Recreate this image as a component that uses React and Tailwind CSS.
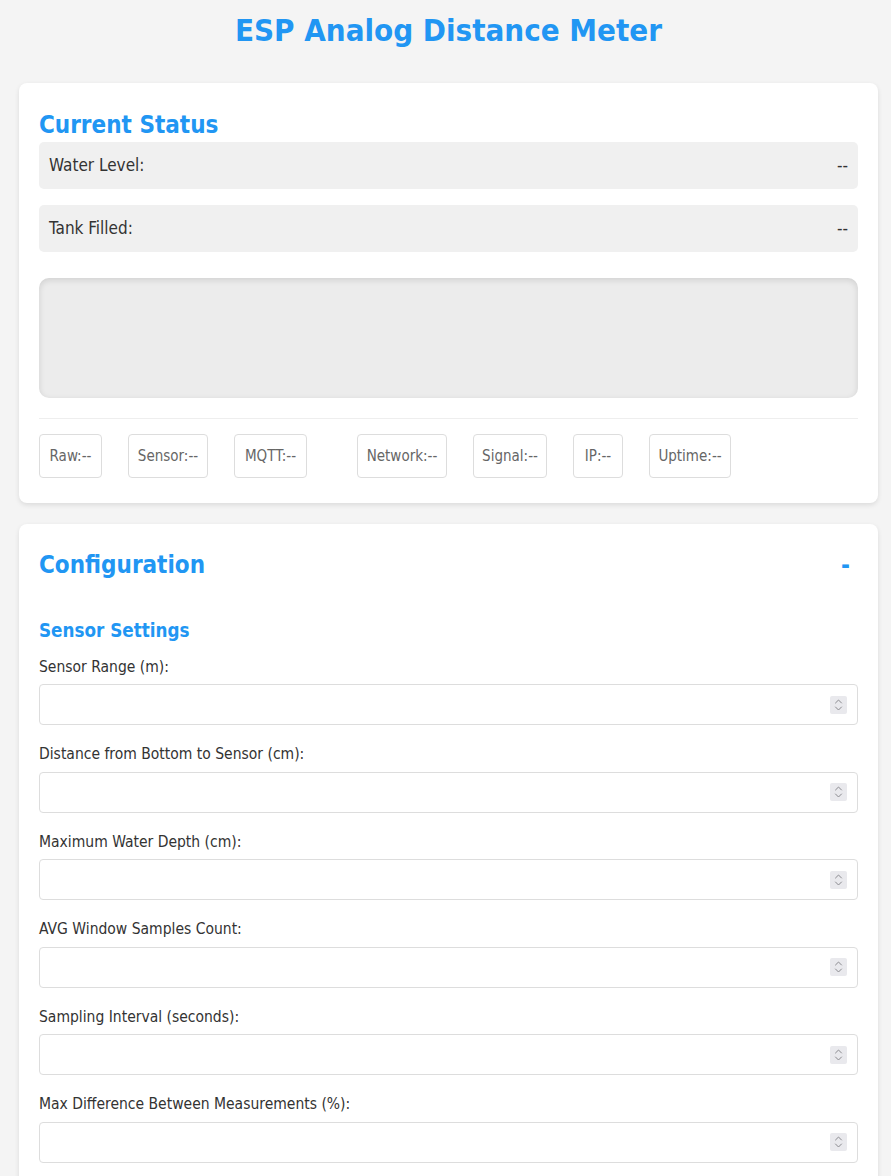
const font = { fontFamily: '"DejaVu Sans Condensed", "DejaVu Sans", sans-serif' }

const chips = [
  { label: 'Raw:', w: 'w-[63px]' },
  { label: 'Sensor:', w: 'w-[80px]' },
  { label: 'MQTT:', w: 'w-[73px]', after: 'mr-[24px]' },
  { label: 'Network:', w: 'w-[90px]' },
  { label: 'Signal:', w: 'w-[74px]' },
  { label: 'IP:', w: 'w-[50px]' },
  { label: 'Uptime:', w: 'w-[82px]' },
]

const fields = [
  'Sensor Range (m):',
  'Distance from Bottom to Sensor (cm):',
  'Maximum Water Depth (cm):',
  'AVG Window Samples Count:',
  'Sampling Interval (seconds):',
  'Max Difference Between Measurements (%):',
]

function StatusRow({ label }) {
  return (
    <div className="flex h-[47px] items-center justify-between rounded-[5px] bg-[#f0f0f0] px-[10px] text-[17px] text-[#333]">
      <span>{label}</span>
      <span>--</span>
    </div>
  )
}

// number field with the little stepper drawn on the right
function NumberField() {
  return (
    <div className="flex h-[41px] w-full items-center rounded-[4px] border border-[#ddd] bg-white pr-[10px]">
      <input
        type="number"
        className="h-full min-w-0 flex-1 bg-transparent px-[10px] text-[14px] outline-none [appearance:textfield] [&::-webkit-inner-spin-button]:appearance-none"
      />
      <div className="flex h-[18px] w-[17px] flex-col items-center justify-center rounded-[2px] bg-[#e9e9ed]">
        <svg width="9" height="14" viewBox="0 0 9 14" fill="none" stroke="#8a8a8f" strokeWidth="1" strokeLinecap="round" strokeLinejoin="round">
          <path d="M1.5 5 L4.5 2 L7.5 5" />
          <path d="M1.5 9 L4.5 12 L7.5 9" />
        </svg>
      </div>
    </div>
  )
}

export default function App() {
  return (
    <div className="min-h-screen overflow-hidden bg-[#f4f4f4] pb-10" style={font}>
      <div className="ml-[19px] w-[859px]">
        {/* Header */}
        <h1 className="pt-[11px] text-center text-[31px] leading-[38px] font-bold text-[#2196f3]">
          ESP Analog Distance Meter
        </h1>

        {/* Current status card */}
        <div className="mt-[34px] rounded-[8px] bg-white px-[20px] pt-[28px] pb-[25px] shadow-[0_2px_5px_rgba(0,0,0,0.1)]">
          <h2 className="text-[24px] leading-[29px] font-bold text-[#2196f3]">Current Status</h2>
          <div className="mt-[2px] flex flex-col gap-[16px]">
            <StatusRow label="Water Level:" />
            <StatusRow label="Tank Filled:" />
          </div>
          <div className="mt-[26px] h-[120px] rounded-[10px] bg-[#ececec] shadow-[inset_0_2px_6px_rgba(0,0,0,0.12)]" />
          <div className="mt-[20px] border-t border-[#eee] pt-[15px]">
            <div className="flex flex-wrap gap-[26px]">
              {chips.map((c) => (
                <div
                  key={c.label}
                  className={`flex h-[44px] items-center justify-center rounded-[4px] border border-[#ddd] text-[15px] text-[#666] ${c.w} ${c.after || ''}`}
                >
                  {c.label}--
                </div>
              ))}
            </div>
          </div>
        </div>

        {/* Configuration card */}
        <div className="mt-[21px] rounded-[8px] bg-white px-[20px] pt-[27px] pb-[30px] shadow-[0_2px_5px_rgba(0,0,0,0.1)]">
          <div className="flex items-center justify-between">
            <h2 className="text-[24px] leading-[29px] font-bold text-[#2196f3]">Configuration</h2>
            <span className="pr-[8px] text-[24px] leading-[29px] font-bold text-[#2196f3]">-</span>
          </div>
          <h3 className="mt-[40px] text-[18.7px] leading-[22px] font-bold text-[#2196f3]">Sensor Settings</h3>
          <div className="mt-[15.5px]">
            {fields.map((f) => (
              <div key={f} className="mb-[20px]">
                <label className="mb-[7.5px] block text-[15.5px] leading-[19px] text-[#333]">{f}</label>
                <NumberField />
              </div>
            ))}
          </div>
        </div>
      </div>
    </div>
  )
}
